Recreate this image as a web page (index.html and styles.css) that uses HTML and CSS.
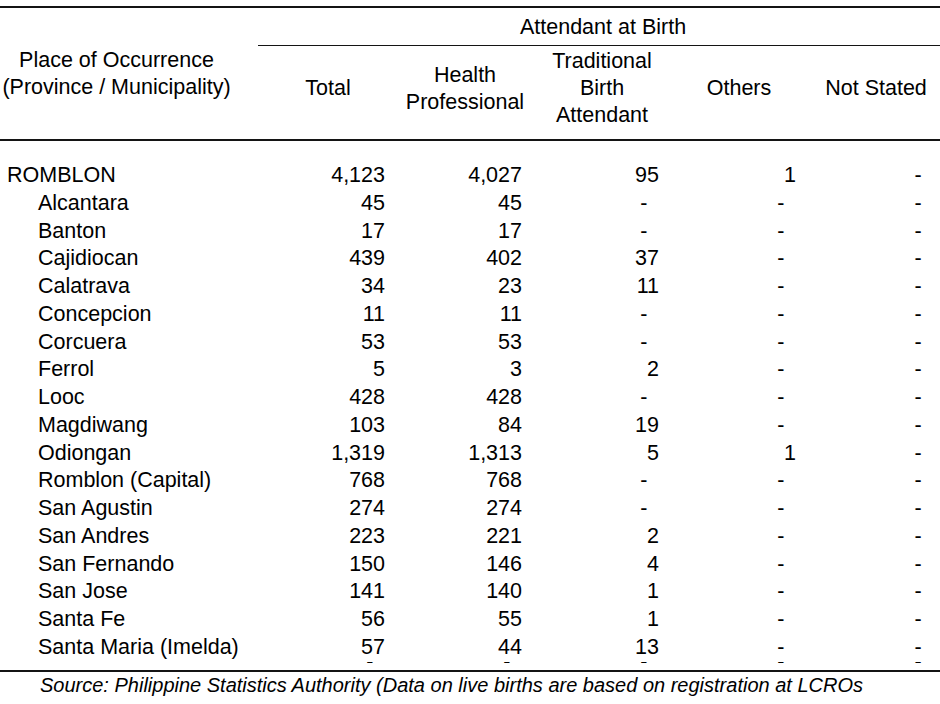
FILE: index.html
```html
<!DOCTYPE html>
<html lang="en">
<head>
<meta charset="utf-8">
<title>Attendant at Birth – Romblon</title>
<link rel="stylesheet" href="styles.css">
</head>
<body>
<div class="sheet">
  <table class="stats">
    <colgroup>
      <col class="c-name">
      <col class="c-num">
      <col class="c-num">
      <col class="c-num">
      <col class="c-num">
      <col class="c-num">
    </colgroup>
    <thead>
      <tr class="h1">
        <th rowspan="2" class="place">Place of Occurrence<br>(Province / Municipality)</th>
        <th colspan="5" class="group">Attendant at Birth</th>
      </tr>
      <tr class="h2">
        <th>Total</th>
        <th>Health<br>Professional</th>
        <th>Traditional<br>Birth<br>Attendant</th>
        <th>Others</th>
        <th>Not Stated</th>
      </tr>
    </thead>
    <tbody>
      <tr class="first"><td class="name prov">ROMBLON</td><td class="num">4,123</td><td class="num">4,027</td><td class="num">95</td><td class="num">1</td><td class="num"><span class="dash">-</span></td></tr>
      <tr><td class="name">Alcantara</td><td class="num">45</td><td class="num">45</td><td class="num"><span class="dash">-</span></td><td class="num"><span class="dash">-</span></td><td class="num"><span class="dash">-</span></td></tr>
      <tr><td class="name">Banton</td><td class="num">17</td><td class="num">17</td><td class="num"><span class="dash">-</span></td><td class="num"><span class="dash">-</span></td><td class="num"><span class="dash">-</span></td></tr>
      <tr><td class="name">Cajidiocan</td><td class="num">439</td><td class="num">402</td><td class="num">37</td><td class="num"><span class="dash">-</span></td><td class="num"><span class="dash">-</span></td></tr>
      <tr><td class="name">Calatrava</td><td class="num">34</td><td class="num">23</td><td class="num">11</td><td class="num"><span class="dash">-</span></td><td class="num"><span class="dash">-</span></td></tr>
      <tr><td class="name">Concepcion</td><td class="num">11</td><td class="num">11</td><td class="num"><span class="dash">-</span></td><td class="num"><span class="dash">-</span></td><td class="num"><span class="dash">-</span></td></tr>
      <tr><td class="name">Corcuera</td><td class="num">53</td><td class="num">53</td><td class="num"><span class="dash">-</span></td><td class="num"><span class="dash">-</span></td><td class="num"><span class="dash">-</span></td></tr>
      <tr><td class="name">Ferrol</td><td class="num">5</td><td class="num">3</td><td class="num">2</td><td class="num"><span class="dash">-</span></td><td class="num"><span class="dash">-</span></td></tr>
      <tr><td class="name">Looc</td><td class="num">428</td><td class="num">428</td><td class="num"><span class="dash">-</span></td><td class="num"><span class="dash">-</span></td><td class="num"><span class="dash">-</span></td></tr>
      <tr><td class="name">Magdiwang</td><td class="num">103</td><td class="num">84</td><td class="num">19</td><td class="num"><span class="dash">-</span></td><td class="num"><span class="dash">-</span></td></tr>
      <tr><td class="name">Odiongan</td><td class="num">1,319</td><td class="num">1,313</td><td class="num">5</td><td class="num">1</td><td class="num"><span class="dash">-</span></td></tr>
      <tr><td class="name">Romblon (Capital)</td><td class="num">768</td><td class="num">768</td><td class="num"><span class="dash">-</span></td><td class="num"><span class="dash">-</span></td><td class="num"><span class="dash">-</span></td></tr>
      <tr><td class="name">San Agustin</td><td class="num">274</td><td class="num">274</td><td class="num"><span class="dash">-</span></td><td class="num"><span class="dash">-</span></td><td class="num"><span class="dash">-</span></td></tr>
      <tr><td class="name">San Andres</td><td class="num">223</td><td class="num">221</td><td class="num">2</td><td class="num"><span class="dash">-</span></td><td class="num"><span class="dash">-</span></td></tr>
      <tr><td class="name">San Fernando</td><td class="num">150</td><td class="num">146</td><td class="num">4</td><td class="num"><span class="dash">-</span></td><td class="num"><span class="dash">-</span></td></tr>
      <tr><td class="name">San Jose</td><td class="num">141</td><td class="num">140</td><td class="num">1</td><td class="num"><span class="dash">-</span></td><td class="num"><span class="dash">-</span></td></tr>
      <tr><td class="name">Santa Fe</td><td class="num">56</td><td class="num">55</td><td class="num">1</td><td class="num"><span class="dash">-</span></td><td class="num"><span class="dash">-</span></td></tr>
      <tr><td class="name">Santa Maria (Imelda)</td><td class="num">57</td><td class="num">44</td><td class="num">13</td><td class="num"><span class="dash">-</span></td><td class="num"><span class="dash">-</span></td></tr>
      <tr class="ghost">
        <td><div class="clip"></div></td>
        <td class="num"><div class="clip"><div class="lift"><span class="dash">-</span></div></div></td>
        <td class="num"><div class="clip"><div class="lift"><span class="dash">-</span></div></div></td>
        <td class="num"><div class="clip"><div class="lift"><span class="dash">-</span></div></div></td>
        <td class="num"><div class="clip"><div class="lift"><span class="dash">-</span></div></div></td>
        <td class="num"><div class="clip"><div class="lift"><span class="dash">-</span></div></div></td>
      </tr>
    </tbody>
  </table>
  <p class="source">Source: Philippine Statistics Authority (Data on live births are based on registration at LCROs</p>
</div>
</body>
</html>
```

FILE: styles.css
```css
html, body {
  margin: 0;
  padding: 0;
  background: #ffffff;
}

body {
  width: 940px;
  height: 704px;
  overflow: hidden;
  font-family: "Liberation Sans", Arial, sans-serif;
  font-size: 21.5px;
  color: #000000;
}

.sheet {
  padding-top: 6px;
}

.stats {
  border-collapse: separate;
  border-spacing: 0;
  table-layout: fixed;
  width: 943px;
  border-top: 2px solid #141414;
}

.c-name {
  width: 258px;
}

.c-num {
  width: 137px;
}

.stats th {
  font-weight: normal;
  padding: 0;
  line-height: 27px;
  text-align: center;
  white-space: nowrap;
}

.stats .place {
  vertical-align: middle;
  padding-right: 25px;
  border-bottom: 2px solid #141414;
}

.stats .group {
  padding: 6px 0 4px 5px;
  border-bottom: 1px solid #141414;
}

.stats .h2 th {
  vertical-align: middle;
  padding: 2px 0 10px 3px;
  border-bottom: 2px solid #141414;
}

.stats td {
  padding: 0;
  line-height: 27.75px;
  white-space: nowrap;
}

.stats .first td {
  padding-top: 21px;
}

.stats td.name {
  text-align: left;
  padding-left: 38px;
}

.stats td.prov {
  padding-left: 7px;
}

.stats td.num {
  text-align: right;
  padding-right: 10px;
}

.dash {
  margin-right: 11.5px;
}

.stats .ghost td {
  border-bottom: 2px solid #141414;
  vertical-align: top;
}

.clip {
  height: 8.5px;
  overflow: hidden;
}

.lift {
  margin-top: -6.5px;
  line-height: 12px;
}

.source {
  margin: 0;
  padding-left: 40px;
  font-size: 20px;
  line-height: 27px;
  font-style: italic;
  white-space: nowrap;
}
```
